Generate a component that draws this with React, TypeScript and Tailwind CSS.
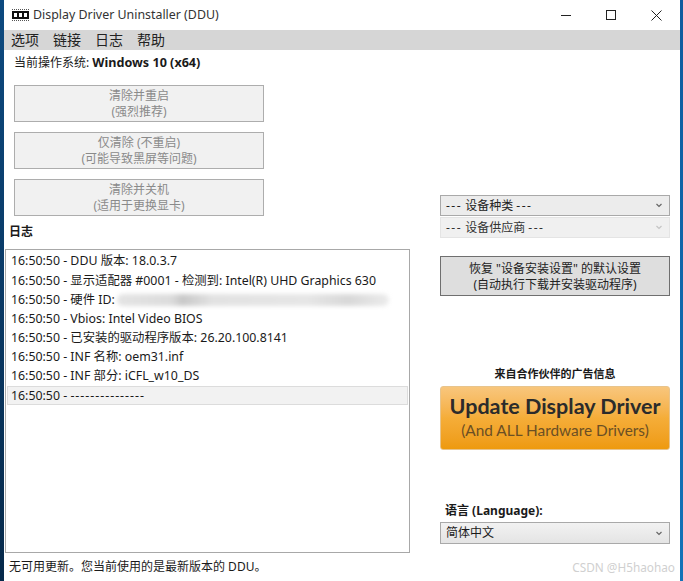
function Chevron({ muted }: { muted?: boolean }) {
  return (
    <svg width="6" height="5" viewBox="0 0 6 5" className="mr-[1px] shrink-0">
      <path
        d="M0.5 1 L3 3.5 L5.5 1"
        fill="none"
        stroke={muted ? "#c4c4c4" : "#666666"}
        strokeWidth="1.2"
      />
    </svg>
  );
}

function ActionButton({ lines }: { lines: [string, string] }) {
  return (
    <div className="flex h-[37px] w-[250px] flex-col items-center justify-center border border-[#adadad] bg-[#f1f1f1] text-[12px] leading-[16px] text-[#8a8a8a]">
      <span>{lines[0]}</span>
      <span>{lines[1]}</span>
    </div>
  );
}

function Select({ label, muted }: { label: string; muted?: boolean }) {
  return (
    <div
      className={`flex h-[21px] items-center justify-between border pl-[5px] pr-[6px] text-[12px] ${
        muted
          ? "border-[#e4e4e4] bg-[#f0f0f0] text-[#333333]"
          : "border-[#a9a9a9] bg-[#ececec] text-[#222222]"
      }`}
    >
      <span>
        <span className="tracking-[1.5px]">---</span> {label} <span className="tracking-[1.5px]">---</span>
      </span>
      <Chevron muted={muted} />
    </div>
  );
}

const logLines = [
  "16:50:50 - DDU 版本: 18.0.3.7",
  "16:50:50 - 显示适配器 #0001 - 检测到: Intel(R) UHD Graphics 630",
];

const logLinesAfter = [
  "16:50:50 - Vbios: Intel Video BIOS",
  "16:50:50 - 已安装的驱动程序版本: 26.20.100.8141",
  "16:50:50 - INF 名称: oem31.inf",
  "16:50:50 - INF 部分: iCFL_w10_DS",
];

export default function App() {
  return (
    <div
      className="relative flex h-[581px] w-[683px] overflow-hidden bg-white text-[#1a1a1a]"
      style={{ fontFamily: '"Noto Sans", "Noto Sans CJK SC", sans-serif' }}
    >
      <div className="w-[4px] shrink-0 bg-gradient-to-b from-[#0d4a80] via-[#0a3a66] to-[#06294a]" />

      <div className="flex min-w-0 flex-1 flex-col">
        <div className="flex h-[30px] shrink-0 items-center pl-[8px]">
          <svg width="17" height="13" viewBox="0 0 17 13" className="mr-[4px]">
            <path d="M0 0.5 H17" stroke="#555555" strokeDasharray="1 1" />
            <rect x="0" y="2" width="17" height="8" fill="#111111" />
            <rect x="2" y="4" width="3" height="4" fill="#ffffff" />
            <rect x="7" y="4" width="3" height="4" fill="#ffffff" />
            <rect x="12" y="4" width="3" height="4" fill="#ffffff" />
            <path d="M0 11.5 H17" stroke="#555555" strokeDasharray="1 1" />
          </svg>
          <span className="text-[12.4px] text-[#333333]">Display Driver Uninstaller (DDU)</span>
          <div className="ml-auto flex items-center gap-[35px] pr-[18px]">
            <div className="h-px w-[10px] bg-[#222222]" />
            <div className="h-[10px] w-[10px] border border-[#222222]" />
            <svg width="11" height="11" viewBox="0 0 11 11">
              <path d="M0.5 0.5 L10.5 10.5 M10.5 0.5 L0.5 10.5" stroke="#222222" strokeWidth="1" />
            </svg>
          </div>
        </div>

        <div className="flex h-[20px] shrink-0 items-center gap-[14px] bg-[#d6d6d6] pb-[2px] pl-[7px] text-[14px] text-[#222222]">
          <span>选项</span>
          <span>链接</span>
          <span>日志</span>
          <span>帮助</span>
        </div>

        <div className="flex min-h-0 flex-1">
          <div className="flex w-[406px] shrink-0 flex-col">
            <div className="ml-[10px] mt-[4px] flex h-[18px] items-center text-[12px]">
              <span>当前操作系统:&nbsp;</span>
              <span className="text-[12.6px] font-bold">Windows 10 (x64)</span>
            </div>
            <div className="ml-[10px] mt-[13px] flex flex-col gap-[10px]">
              <ActionButton lines={["清除并重启", "(强烈推荐)"]} />
              <ActionButton lines={["仅清除 (不重启)", "(可能导致黑屏等问题)"]} />
              <ActionButton lines={["清除并关机", "(适用于更换显卡)"]} />
            </div>
            <div className="ml-[5px] mt-[8px] flex h-[16px] items-center text-[12px] font-bold">日志</div>
            <div className="ml-[1px] mt-[9px] h-[304px] border border-[#a8a8a8] px-[1px] pt-[2px] text-[12.35px]">
              {logLines.map((line) => (
                <div key={line} className="flex h-[19.2px] items-center pl-[4px]">
                  {line}
                </div>
              ))}
              <div className="flex h-[19.2px] items-center pl-[4px]">
                <span>16:50:50 - 硬件 ID:</span>
                <div className="ml-[2px] h-[12px] w-[272px] rounded-full bg-[linear-gradient(90deg,#e4e4e4_0%,#dcdcdc_20%,#c8c8c8_24%,#e2e2e2_35%,#e6e6e6_70%,#d8d8d8_85%,#ececec_100%)] blur-[2px]" />
              </div>
              {logLinesAfter.map((line) => (
                <div key={line} className="flex h-[19.2px] items-center pl-[4px]">
                  {line}
                </div>
              ))}
              <div className="flex h-[19px] items-center whitespace-pre border border-[#dcdcdc] bg-[#f2f2f2] pl-[3px]">
                <span>16:50:50 - </span>
                <span className="tracking-[1px]">---------------</span>
              </div>
            </div>
            <div className="ml-[5px] mt-[6px] text-[12px] leading-[16px]">无可用更新。您当前使用的是最新版本的 DDU。</div>
          </div>

          <div className="ml-[30px] flex w-[230px] shrink-0 flex-col">
            <div className="mt-[145px] flex flex-col gap-px">
              <Select label="设备种类" />
              <Select label="设备供应商" muted />
            </div>
            <div className="mt-[18px] flex h-[40px] flex-col items-center justify-center border border-[#6f6f6f] bg-[#dedede] pt-[2px] text-[12px] leading-[16px] text-[#222222]">
              <span>恢复 "设备安装设置" 的默认设置</span>
              <span>(自动执行下载并安装驱动程序)</span>
            </div>
            <div className="mt-[71px] text-center text-[11px] font-bold leading-[14px]">来自合作伙伴的广告信息</div>
            <div
              className="mt-[5px] flex h-[64px] flex-col items-center justify-center whitespace-nowrap rounded-[3px] border border-[#e8c48c] bg-gradient-to-b from-[#f8c67c] via-[#f5ad38] to-[#ee9a0c] pb-[3px]"
              style={{ fontFamily: 'Lato, "Noto Sans", sans-serif' }}
            >
              <span className="text-[21.5px] font-bold leading-[27px] text-[#2b2b2b]">Update Display Driver</span>
              <span className="text-[15.4px] leading-[20px] text-[#6b4f24]">(And ALL Hardware Drivers)</span>
            </div>
            <div className="ml-[5px] mt-[53px] text-[12px] font-bold leading-[16px]">语言 (Language):</div>
            <div className="mt-[3px] flex h-[22px] items-center justify-between border border-[#a9a9a9] bg-gradient-to-b from-[#f2f2f2] to-[#e4e4e4] pl-[5px] pr-[6px] text-[12px]">
              <span>简体中文</span>
              <Chevron />
            </div>
          </div>
        </div>
      </div>

      <div className="w-[3px] shrink-0 bg-gradient-to-b from-[#0e5c9e] to-[#1273b8]" />

      <div className="absolute bottom-[7px] right-[8px] text-[11.8px] leading-[14px] text-[#d0d0d0]">CSDN @H5haohao</div>
    </div>
  );
}
